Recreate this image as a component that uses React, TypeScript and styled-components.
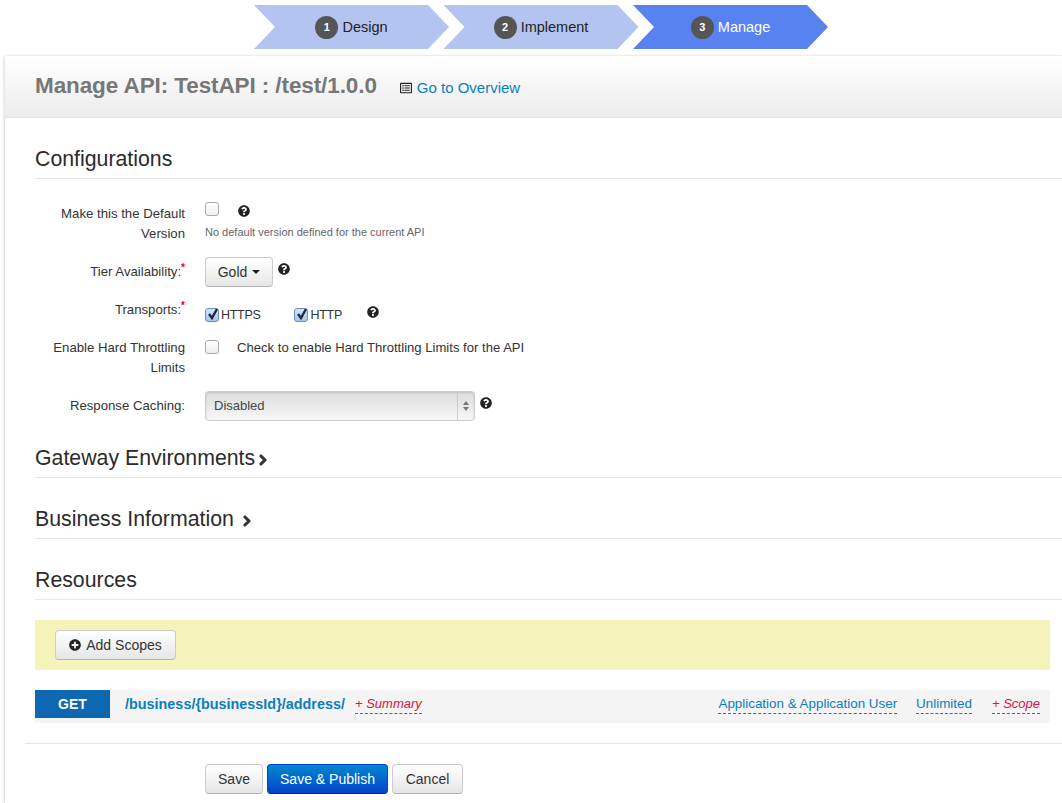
import { ReactNode } from 'react'
import styled, { createGlobalStyle } from 'styled-components'
import { FaChevronRight, FaPlusCircle, FaQuestionCircle, FaRegListAlt } from 'react-icons/fa'

const GlobalStyle = createGlobalStyle`
  html, body {
    margin: 0;
    padding: 0;
    background: #fff;
    overflow: hidden;
  }
  body {
    font-family: "Liberation Sans", Arial, sans-serif;
    font-size: 13px;
    line-height: 20px;
    color: #333;
  }
`

const Page = styled.div`
  width: 1062px;
  height: 803px;
  overflow: hidden;
`

const Wizard = styled.div`
  display: flex;
  height: 55px;
  padding: 5px 0 0 254px;
  box-sizing: border-box;
`

const Step = styled.div<{ $active?: boolean }>`
  display: flex;
  align-items: center;
  justify-content: center;
  gap: 4px;
  width: 195px;
  height: 44px;
  margin-right: -5.5px;
  box-sizing: border-box;
  clip-path: polygon(0 0, 174px 0, 100% 50%, 174px 100%, 0 100%, 21px 50%);
  background: ${p => (p.$active ? '#5882ef' : '#b2c4ef')};
  color: ${p => (p.$active ? '#fff' : '#222')};
  font-size: 14.5px;
`

const StepNumber = styled.span`
  display: flex;
  align-items: center;
  justify-content: center;
  width: 23px;
  height: 23px;
  border-radius: 50%;
  background: #555;
  color: #fff;
  font-size: 11px;
  font-weight: bold;
`

const Panel = styled.div`
  height: 748px;
  margin-left: 4px;
  border-left: 1px solid #e6e6e6;
  border-top: 1px solid #eee;
  border-top-left-radius: 4px;
  box-shadow: -1px 0 2px rgba(0, 0, 0, 0.08);
`

const PanelHeader = styled.div`
  display: flex;
  align-items: center;
  gap: 23px;
  height: 59px;
  padding: 0 0 2px 30px;
  background: linear-gradient(#fff, #ececec);
  border-bottom: 1px solid #e2e2e2;
`

const PageTitle = styled.h1`
  margin: 0;
  font-size: 22.5px;
  line-height: 28px;
  font-weight: bold;
  color: #777;
  letter-spacing: -0.1px;
`

const OverviewLink = styled.a`
  display: flex;
  align-items: center;
  gap: 5px;
  margin-top: 4px;
  color: #0a7ec2;
  font-size: 15px;

  svg {
    color: #222;
    width: 12px;
    height: 12px;
  }
`

const PanelBody = styled.div`
  padding: 24px 0 0 30px;
`

const SectionTitle = styled.h2`
  display: flex;
  align-items: center;
  margin: 0;
  height: 34px;
  padding-bottom: 2px;
  border-bottom: 1px solid #e5e5e5;
  font-size: 21.3px;
  line-height: 32px;
  font-weight: normal;
  color: #2b2b2b;
`

const Chevron = styled(FaChevronRight)<{ $ml: number }>`
  width: 10px;
  height: 12px;
  margin: 3px 0 0 ${p => p.$ml}px;
  color: #333;
  stroke: currentColor;
  stroke-width: 50px;
`

const CollapsedSection = styled.div<{ $top: number }>`
  margin-top: ${p => p.$top}px;
`

const Form = styled.div`
  display: flex;
  flex-direction: column;
  padding-top: 24px;
`

const Row = styled.div<{ $mb: number }>`
  display: grid;
  grid-template-columns: 150px 1fr;
  column-gap: 20px;
  margin-bottom: ${p => p.$mb}px;
`

const Label = styled.div<{ $pt?: number }>`
  text-align: right;
  padding-top: ${p => p.$pt ?? 0}px;
  color: #333;
  font-size: 13.2px;
`

const Required = styled.sup`
  color: #e00;
  font-size: 10px;
  font-weight: bold;
  line-height: 0;
`

const Controls = styled.div`
  display: flex;
  align-items: center;
  color: #333;
`

const HelpIcon = styled(FaQuestionCircle)<{ $ml: number; $mt?: number }>`
  width: 12px;
  height: 12px;
  margin-left: ${p => p.$ml}px;
  margin-top: ${p => p.$mt ?? 0}px;
  align-self: flex-start;
  color: #222;
`

const CheckBox = styled.span<{ $checked?: boolean; $mt?: number }>`
  display: inline-flex;
  flex: none;
  align-items: center;
  justify-content: center;
  width: 12px;
  height: 12px;
  margin-top: ${p => p.$mt ?? 0}px;
  border: 1px solid ${p => (p.$checked ? '#6d8fc0' : '#aaa')};
  border-radius: 3px;
  background: ${p => (p.$checked ? 'linear-gradient(#d5e4f7, #a9c6ea)' : 'linear-gradient(#fff, #eee)')};
  position: relative;

  svg {
    position: absolute;
    left: 0;
    top: -2px;
  }
`

const TopStack = styled.div`
  display: flex;
  flex-direction: column;
`

const TopLine = styled.div`
  display: flex;
  height: 18px;
`

const HintText = styled.div`
  margin-top: 3px;
  font-size: 11px;
  line-height: 16px;
  color: #666;
`

const InlineHelp = styled.span`
  margin-left: 18px;
  color: #333;
  font-size: 13.1px;
  white-space: nowrap;
`

const DropdownButton = styled.div`
  display: flex;
  align-items: center;
  justify-content: center;
  gap: 5px;
  width: 66px;
  height: 28px;
  border: 1px solid #ccc;
  border-bottom-color: #b3b3b3;
  border-radius: 4px;
  background: linear-gradient(#fff, #e6e6e6);
  font-size: 14px;
  color: #333;
`

const Caret = styled.span`
  width: 0;
  height: 0;
  border-left: 4px solid transparent;
  border-right: 4px solid transparent;
  border-top: 4px solid #222;
`

const CheckLabel = styled.span<{ $mr: number }>`
  display: flex;
  align-items: center;
  gap: 2px;
  margin-right: ${p => p.$mr}px;
  margin-top: 5px;
  font-size: 12.5px;
  letter-spacing: -0.3px;
`

const SelectBox = styled.div`
  display: flex;
  width: 268px;
  height: 28px;
  border: 1px solid #ccc;
  border-radius: 4px;
  background: linear-gradient(#dcdcdc, #f7f7f7);
  box-shadow: inset 0 1px 2px rgba(0, 0, 0, 0.12);
  color: #444;
  font-size: 13px;
  line-height: 28px;
`

const SelectText = styled.div`
  flex: 1;
  padding-left: 8px;
`

const SelectArrows = styled.div`
  display: flex;
  flex-direction: column;
  align-items: center;
  justify-content: center;
  gap: 2px;
  width: 16px;
  border-left: 1px solid #ccc;
`

const ArrowUp = styled.span`
  border-left: 3px solid transparent;
  border-right: 3px solid transparent;
  border-bottom: 4px solid #777;
`

const ArrowDown = styled(ArrowUp)`
  border-bottom: 0;
  border-top: 4px solid #777;
`

const ScopeBar = styled.div`
  display: flex;
  align-items: center;
  width: 1015px;
  height: 50px;
  margin-top: 20px;
  padding-left: 20px;
  box-sizing: border-box;
  background: #f4f3ba;
`

const BaseButton = styled.button`
  display: inline-flex;
  align-items: center;
  justify-content: center;
  height: 30px;
  padding: 0;
  border: 1px solid #ccc;
  border-bottom-color: #b3b3b3;
  border-radius: 4px;
  background: linear-gradient(#fff, #e6e6e6);
  font-family: inherit;
  font-size: 14px;
  color: #333;
`

const AddScopes = styled(BaseButton)`
  gap: 5px;
  width: 121px;

  svg {
    width: 12px;
    height: 12px;
    color: #222;
  }
`

const ResourceRow = styled.div`
  display: flex;
  align-items: flex-start;
  width: 1015px;
  height: 33px;
  margin-top: 20px;
  padding-right: 10px;
  box-sizing: border-box;
  background: #f4f4f4;
`

const MethodBadge = styled.div`
  width: 75px;
  height: 28px;
  background: #0d67b1;
  color: #fff;
  font-size: 14px;
  font-weight: bold;
  line-height: 28px;
  text-align: center;
`

const ResourcePath = styled.a`
  margin-left: 15px;
  margin-top: 4px;
  color: #0a7ec2;
  font-size: 14.4px;
  font-weight: bold;
`

const Editable = styled.a<{ $empty?: boolean; $ml: number }>`
  margin-left: ${p => p.$ml}px;
  margin-top: 4px;
  height: 19px;
  border-bottom: 1px dashed #0a7ec2;
  font-size: ${p => (p.$empty ? 13 : 13.4)}px;
  font-style: ${p => (p.$empty ? 'italic' : 'normal')};
  color: ${p => (p.$empty ? '#dd1144' : '#0a7ec2')};
  white-space: nowrap;
`

const Spacer = styled.div`
  flex: 1;
`

const Divider = styled.div`
  margin: 20px 0 0 -10px;
  border-top: 1px solid #e5e5e5;
`

const FormActions = styled.div`
  display: flex;
  gap: 4px;
  margin: 20px 0 0 170px;
`

const ActionButton = styled(BaseButton)<{ $w: number }>`
  width: ${p => p.$w}px;
`

const PrimaryButton = styled(ActionButton)`
  border-color: #04c #04c #002a80;
  background: linear-gradient(#0088cc, #0044cc);
  color: #fff;
`

function Check({ checked, top }: { checked?: boolean; top?: number }) {
  return (
    <CheckBox $checked={checked} $mt={top}>
      {checked && (
        <svg width="14" height="14" viewBox="0 0 14 14">
          <path d="M3 7l3 4 5-9" fill="none" stroke="#1a2a44" strokeWidth="2.4" />
        </svg>
      )}
    </CheckBox>
  )
}

function Section({ top, title, children }: { top: number; title: ReactNode; children?: ReactNode }) {
  return (
    <CollapsedSection $top={top}>
      <SectionTitle>{title}</SectionTitle>
      {children}
    </CollapsedSection>
  )
}

export default function App() {
  return (
    <Page>
      <GlobalStyle />
      <Wizard>
        <Step>
          <StepNumber>1</StepNumber>Design
        </Step>
        <Step>
          <StepNumber>2</StepNumber>Implement
        </Step>
        <Step $active>
          <StepNumber>3</StepNumber>Manage
        </Step>
      </Wizard>
      <Panel>
        <PanelHeader>
          <PageTitle>Manage API: TestAPI : /test/1.0.0</PageTitle>
          <OverviewLink>
            <FaRegListAlt />
            Go to Overview
          </OverviewLink>
        </PanelHeader>
        <PanelBody>
          <Section top={0} title="Configurations">
            <Form>
              <Row $mb={13}>
                <Label $pt={1}>Make this the Default Version</Label>
                <TopStack>
                  <TopLine>
                    <Check top={-1} />
                    <HelpIcon $ml={19} $mt={2} />
                  </TopLine>
                  <HintText>No default version defined for the current API</HintText>
                </TopStack>
              </Row>
              <Row $mb={13}>
                <Label $pt={5}>
                  Tier Availability:<Required>*</Required>
                </Label>
                <Controls>
                  <DropdownButton>
                    Gold <Caret />
                  </DropdownButton>
                  <HelpIcon $ml={5} $mt={6} />
                </Controls>
              </Row>
              <Row $mb={13}>
                <Label>
                  Transports:<Required>*</Required>
                </Label>
                <Controls>
                  <CheckLabel $mr={34}>
                    <Check checked />
                    HTTPS
                  </CheckLabel>
                  <CheckLabel $mr={19}>
                    <Check checked />
                    HTTP
                  </CheckLabel>
                  <HelpIcon $ml={6} $mt={6} />
                </Controls>
              </Row>
              <Row $mb={13}>
                <Label>Enable Hard Throttling Limits</Label>
                <TopLine>
                  <Check top={2} />
                  <InlineHelp>Check to enable Hard Throttling Limits for the API</InlineHelp>
                </TopLine>
              </Row>
              <Row $mb={0}>
                <Label $pt={5}>Response Caching:</Label>
                <Controls>
                  <SelectBox>
                    <SelectText>Disabled</SelectText>
                    <SelectArrows>
                      <ArrowUp />
                      <ArrowDown />
                    </SelectArrows>
                  </SelectBox>
                  <HelpIcon $ml={5} $mt={6} />
                </Controls>
              </Row>
            </Form>
          </Section>
          <Section
            top={20}
            title={
              <>
                Gateway Environments
                <Chevron $ml={3} />
              </>
            }
          />
          <Section
            top={24}
            title={
              <>
                Business Information
                <Chevron $ml={8} />
              </>
            }
          />
          <Section top={24} title="Resources" />
          <ScopeBar>
            <AddScopes>
              <FaPlusCircle />
              Add Scopes
            </AddScopes>
          </ScopeBar>
          <ResourceRow>
            <MethodBadge>GET</MethodBadge>
            <ResourcePath>/business/{'{businessId}'}/address/</ResourcePath>
            <Editable $empty $ml={10}>+ Summary</Editable>
            <Spacer />
            <Editable $ml={0}>Application &amp; Application User</Editable>
            <Editable $ml={19}>Unlimited</Editable>
            <Editable $empty $ml={20}>+ Scope</Editable>
          </ResourceRow>
          <Divider />
          <FormActions>
            <ActionButton $w={58}>Save</ActionButton>
            <PrimaryButton $w={121}>Save &amp; Publish</PrimaryButton>
            <ActionButton $w={71}>Cancel</ActionButton>
          </FormActions>
        </PanelBody>
      </Panel>
    </Page>
  )
}
